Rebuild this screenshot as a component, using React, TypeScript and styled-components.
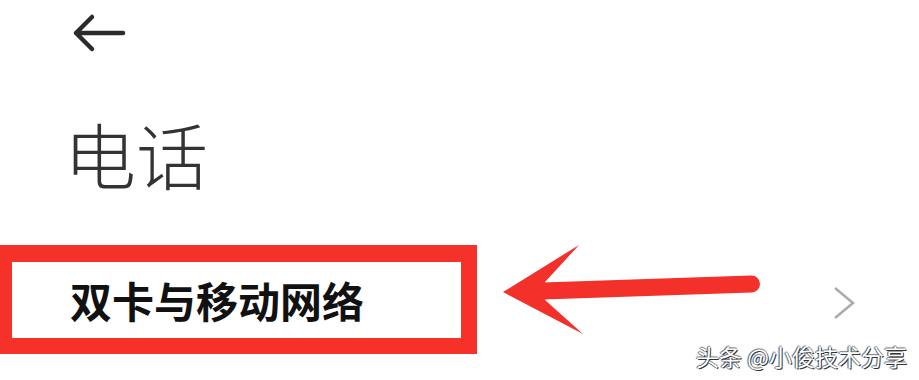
import React from 'react';
import styled, { createGlobalStyle } from 'styled-components';

const GlobalStyle = createGlobalStyle`
html, body {
  margin: 0;
  padding: 0;
  background: #ffffff;
}
body {
  font-family: "Noto Sans CJK SC", "Noto Sans", sans-serif;
}
`;

const App = () => {
  return (
    <>
      <GlobalStyle />
      <Page>
        <Header>
          <svg width="60" height="42" viewBox="0 0 60 42">
            <path d="M53 21 H6 M22 5 L6 21 L22 37" fill="none" stroke="#2b2b2b" strokeWidth="4.5" strokeLinecap="round" strokeLinejoin="round" />
          </svg>
        </Header>
        <Title>电话</Title>
        <Row>
          <Highlight>
            <Label>双卡与移动网络</Label>
          </Highlight>
          <Chevron width="24" height="36" viewBox="0 0 24 36">
            <path d="M2 2 L20 17 L2 32" fill="none" stroke="#ababab" strokeWidth="2.5" />
          </Chevron>
          <Pointer width="270" height="100" viewBox="0 0 270 100">
            <path d="M8 52 L84 5 L50 42 L50 60 L88 94 Z" fill="#f3302a" />
            <path d="M48 51 L256.5 44" stroke="#f3302a" strokeWidth="17" strokeLinecap="round" />
          </Pointer>
        </Row>
        <Watermark>头条 @小俊技术分享</Watermark>
      </Page>
    </>
  );
};

export default App;

const Page = styled.div`
position: relative;
width: 919px;
height: 380px;
overflow: hidden;
display: flex;
flex-direction: column;
background: #ffffff;
`;
const Header = styled.div`
display: flex;
align-items: center;
padding: 12px 0 0 70px;
`;
const Title = styled.div`
margin-top: 63px;
padding-left: 64px;
font-size: 72px;
line-height: 1;
font-weight: 300;
color: #333333;
`;
const Row = styled.div`
position: relative;
margin-top: 56px;
display: flex;
align-items: center;
`;
const Highlight = styled.div`
box-sizing: content-box;
width: 449px;
height: 76px;
border: 16px solid #f53129;
border-top-width: 17px;
border-left-width: 12px;
display: flex;
align-items: center;
`;
const Label = styled.div`
padding-left: 58px;
font-size: 42px;
line-height: 1;
font-weight: 700;
color: #111111;
`;
const Chevron = styled.svg`
margin-left: auto;
margin-right: 62px;
margin-top: 8px;
`;
const Pointer = styled.svg`
position: absolute;
left: 495px;
top: -5px;
`;
const Watermark = styled.div`
position: absolute;
right: 12px;
bottom: 12px;
font-size: 23px;
line-height: 1;
color: #ffffff;
text-shadow: 1px 1px 0 #333, -1px 0 1px #555, 0 -1px 1px #777;
`;
